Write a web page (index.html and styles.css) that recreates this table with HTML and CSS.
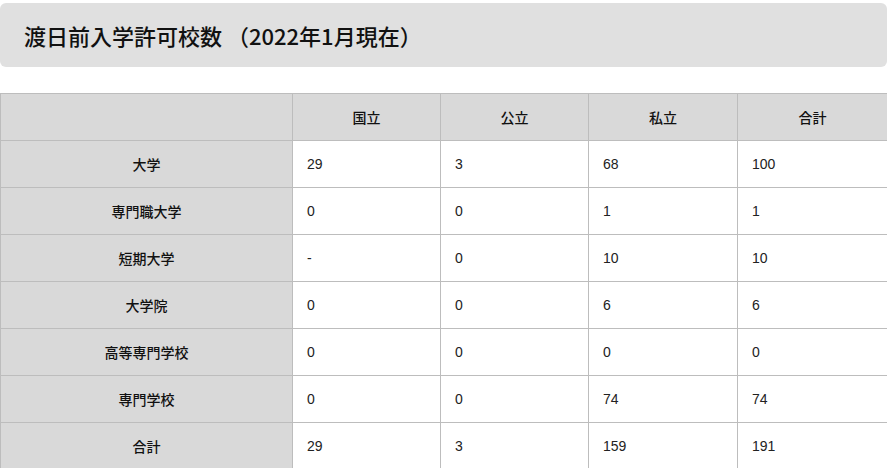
FILE: index.html
```html
<!DOCTYPE html>
<html lang="ja">
<head>
<meta charset="utf-8">
<link rel="stylesheet" href="styles.css">
</head>
<body>
<div class="page">
  <h2 class="title">渡日前入学許可校数 （2022年1月現在）</h2>
  <table class="stats">
    <thead>
      <tr><th class="corner"></th><th>国立</th><th>公立</th><th>私立</th><th>合計</th></tr>
    </thead>
    <tbody>
      <tr><th>大学</th><td>29</td><td>3</td><td>68</td><td>100</td></tr>
      <tr><th>専門職大学</th><td>0</td><td>0</td><td>1</td><td>1</td></tr>
      <tr><th>短期大学</th><td>-</td><td>0</td><td>10</td><td>10</td></tr>
      <tr><th>大学院</th><td>0</td><td>0</td><td>6</td><td>6</td></tr>
      <tr><th>高等専門学校</th><td>0</td><td>0</td><td>0</td><td>0</td></tr>
      <tr><th>専門学校</th><td>0</td><td>0</td><td>74</td><td>74</td></tr>
      <tr><th>合計</th><td>29</td><td>3</td><td>159</td><td>191</td></tr>
    </tbody>
  </table>
</div>
</body>
</html>
```
FILE: styles.css
```css
html, body {
  margin: 0;
  padding: 0;
  background: #ffffff;
}
.page {
  width: 887px;
  padding-top: 3px;
  font-family: "Liberation Sans", "Noto Sans CJK JP", sans-serif;
  color: #222;
}
.title {
  margin: 0;
  height: 64px;
  box-sizing: border-box;
  padding: 0 0 0 24px;
  display: flex;
  align-items: center;
  background: #e0e0e0;
  border-radius: 6px;
  font-family: "Noto Sans CJK JP", sans-serif;
  font-size: 22px;
  font-weight: 500;
  color: #111;
}
.stats {
  margin-top: 26px;
  width: 887px;
  border-collapse: collapse;
  table-layout: fixed;
  font-size: 14px;
}
.stats th, .stats td {
  border: 1px solid #bdbdbd;
  height: 47px;
  padding: 0;
  box-sizing: border-box;
}
.stats th {
  background: #d9d9d9;
  font-family: "Noto Sans CJK JP", sans-serif;
  font-weight: 500;
  font-size: 14px;
  text-align: center;
  color: #111;
}
.stats td {
  background: #fff;
  padding-left: 14px;
  text-align: left;
  color: #222;
}
.stats thead th:nth-child(1) { width: 292px; }
.stats thead th:nth-child(2) { width: 148px; }
.stats thead th:nth-child(3) { width: 148px; }
.stats thead th:nth-child(4) { width: 149px; }
.stats thead th:nth-child(5) { width: 150px; }
```
